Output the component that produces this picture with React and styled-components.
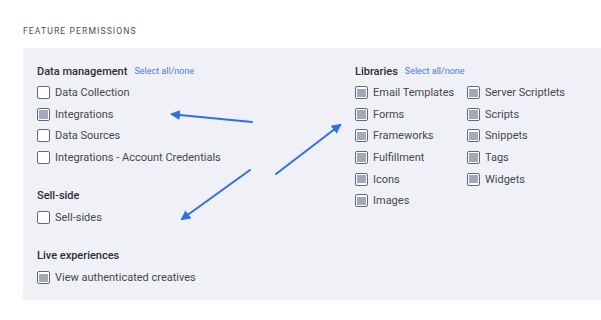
import React from "react";
import styled, { createGlobalStyle } from "styled-components";

const Global = createGlobalStyle`
  html, body { margin: 0; padding: 0; background: #ffffff; }
  body { font-family: Roboto, "Liberation Sans", Arial, sans-serif; width: 601px; height: 320px; overflow: hidden; }
`;

const Page = styled.div`
  position: relative;
  width: 601px;
  height: 320px;
  padding: 25px 0 0 23px;
  box-sizing: border-box;
`;

const Title = styled.div`
  font-size: 8.6px;
  letter-spacing: 1.1px;
  color: #4c5056;
  text-transform: uppercase;
  height: 13px;
  line-height: 13px;
  margin-bottom: 10px;
`;

const Panel = styled.div`
  background: #f0f1f6;
  height: 252px;
  box-sizing: border-box;
  padding: 12px 14px;
  display: grid;
  grid-template-columns: 318px 1fr;
`;

const Column = styled.div`
  display: flex;
  flex-direction: column;
  gap: 16.5px;
`;

const Group = styled.div`
  display: flex;
  flex-direction: column;
`;

const Heading = styled.div`
  height: 22px;
  display: flex;
  align-items: center;
  gap: 7px;
`;

const HeadingText = styled.span`
  font-size: 11px;
  font-weight: 500;
  color: #2b2e32;
`;

const SelectLink = styled.a`
  font-size: 9px;
  color: #4b7bd6;
  cursor: pointer;
`;

const Items = styled.div`
  display: grid;
  grid-template-columns: ${(p) => (p.$cols === 2 ? "112px 1fr" : "1fr")};
`;

const SubCol = styled.div`
  display: flex;
  flex-direction: column;
`;

const Row = styled.label`
  height: 21.6px;
  display: flex;
  align-items: center;
  gap: 5px;
  font-size: 11px;
  color: #45484e;
`;

const Box = styled.span`
  width: 13px;
  height: 13px;
  box-sizing: border-box;
  border: 1.4px solid #646873;
  border-radius: 2px;
  background: #ffffff;
  padding: 1.4px;
  display: inline-flex;
  flex: none;
  &::after {
    content: "";
    flex: 1;
    background: ${(p) => (p.$filled ? "#a2a9ba" : "transparent")};
  }
`;

const Arrows = styled.svg`
  position: absolute;
  left: 0;
  top: 0;
  pointer-events: none;
`;

const Item = ({ label, filled }) => (
  <Row>
    <Box $filled={filled} />
    {label}
  </Row>
);

export default function App() {
  return (
    <Page>
      <Global />
      <Title>Feature permissions</Title>
      <Panel>
        <Column>
          <Group>
            <Heading>
              <HeadingText>Data management</HeadingText>
              <SelectLink>Select all/none</SelectLink>
            </Heading>
            <Items>
              <Item label="Data Collection" />
              <Item label="Integrations" filled />
              <Item label="Data Sources" />
              <Item label="Integrations - Account Credentials" />
            </Items>
          </Group>
          <Group>
            <Heading>
              <HeadingText>Sell-side</HeadingText>
            </Heading>
            <Items>
              <Item label="Sell-sides" />
            </Items>
          </Group>
          <Group>
            <Heading>
              <HeadingText>Live experiences</HeadingText>
            </Heading>
            <Items>
              <Item label="View authenticated creatives" filled />
            </Items>
          </Group>
        </Column>
        <Column>
          <Group>
            <Heading>
              <HeadingText>Libraries</HeadingText>
              <SelectLink>Select all/none</SelectLink>
            </Heading>
            <Items $cols={2}>
              <SubCol>
                <Item label="Email Templates" filled />
                <Item label="Forms" filled />
                <Item label="Frameworks" filled />
                <Item label="Fulfillment" filled />
                <Item label="Icons" filled />
                <Item label="Images" filled />
              </SubCol>
              <SubCol>
                <Item label="Server Scriptlets" filled />
                <Item label="Scripts" filled />
                <Item label="Snippets" filled />
                <Item label="Tags" filled />
                <Item label="Widgets" filled />
              </SubCol>
            </Items>
          </Group>
        </Column>
      </Panel>
      <Arrows width="601" height="320" viewBox="0 0 601 320">
        <defs>
          <marker id="ah" viewBox="0 0 10 10" refX="8" refY="5" markerWidth="5" markerHeight="5" orient="auto-start-reverse">
            <path d="M0 0 L10 5 L0 10 z" fill="#2f6fe6" />
          </marker>
        </defs>
        <g stroke="#2f6fe6" strokeWidth="2" strokeLinecap="round" fill="none">
          <line x1="252" y1="122" x2="172" y2="114.2" markerEnd="url(#ah)" />
          <line x1="250" y1="170" x2="182" y2="219" markerEnd="url(#ah)" />
          <line x1="276" y1="174" x2="340" y2="125" markerEnd="url(#ah)" />
        </g>
      </Arrows>
    </Page>
  );
}
